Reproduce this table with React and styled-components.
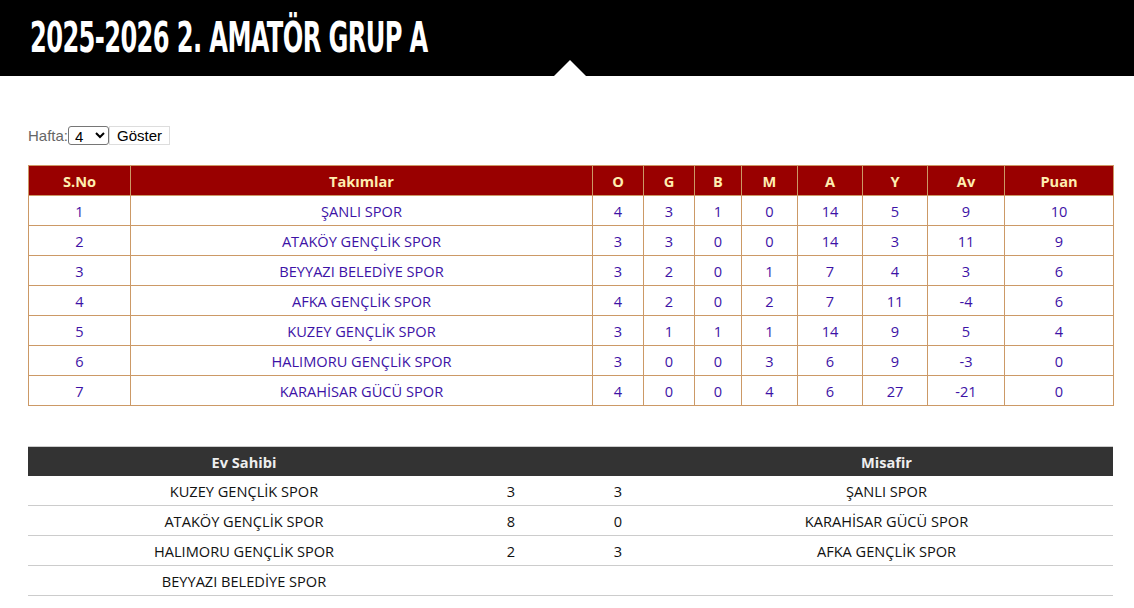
import React from 'react'
import styled, { createGlobalStyle } from 'styled-components'

const standings = [
  [1, 'ŞANLI SPOR', 4, 3, 1, 0, 14, 5, 9, 10],
  [2, 'ATAKÖY GENÇLİK SPOR', 3, 3, 0, 0, 14, 3, 11, 9],
  [3, 'BEYYAZI BELEDİYE SPOR', 3, 2, 0, 1, 7, 4, 3, 6],
  [4, 'AFKA GENÇLİK SPOR', 4, 2, 0, 2, 7, 11, -4, 6],
  [5, 'KUZEY GENÇLİK SPOR', 3, 1, 1, 1, 14, 9, 5, 4],
  [6, 'HALIMORU GENÇLİK SPOR', 3, 0, 0, 3, 6, 9, -3, 0],
  [7, 'KARAHİSAR GÜCÜ SPOR', 4, 0, 0, 4, 6, 27, -21, 0],
]

const fixtures = [
  ['KUZEY GENÇLİK SPOR', '3', '3', 'ŞANLI SPOR'],
  ['ATAKÖY GENÇLİK SPOR', '8', '0', 'KARAHİSAR GÜCÜ SPOR'],
  ['HALIMORU GENÇLİK SPOR', '2', '3', 'AFKA GENÇLİK SPOR'],
  ['BEYYAZI BELEDİYE SPOR', '', '', ''],
]

const cols = ['S.No', 'Takımlar', 'O', 'G', 'B', 'M', 'A', 'Y', 'Av', 'Puan']
const widths = [102, 462, 51, 51, 47, 56, 65, 65, 77, 109]

const App = () => {
  return (
    <>
      <Global />
      <Header>
        <Title>2025-2026 2. AMATÖR GRUP A</Title>
        <Notch />
      </Header>
      <Content>
        <Filter>
          <Label>Hafta:</Label>
          <Select defaultValue="4">
            {[1, 2, 3, 4, 5, 6, 7].map(n => (
              <option key={n} value={n}>{n}</option>
            ))}
          </Select>
          <ShowButton>Göster</ShowButton>
        </Filter>

        <Standings>
          <colgroup>
            {widths.map((w, i) => <col key={i} style={{ width: w }} />)}
          </colgroup>
          <thead>
            <tr>
              {cols.map(c => <Th key={c}>{c}</Th>)}
            </tr>
          </thead>
          <tbody>
            {standings.map(row => (
              <tr key={row[0]}>
                {row.map((v, i) => <Td key={i}>{v}</Td>)}
              </tr>
            ))}
          </tbody>
        </Standings>

        <Fixtures>
          <colgroup>
            <col style={{ width: 432 }} />
            <col style={{ width: 102 }} />
            <col style={{ width: 112 }} />
            <col />
          </colgroup>
          <thead>
            <tr>
              <FTh>Ev Sahibi</FTh>
              <FTh />
              <FTh />
              <FTh $shift>Misafir</FTh>
            </tr>
          </thead>
          <tbody>
            {fixtures.map((f, i) => (
              <tr key={i}>
                <FTd>{f[0]}</FTd>
                <FTd>{f[1]}</FTd>
                <FTd>{f[2]}</FTd>
                <FTd $shift>{f[3]}</FTd>
              </tr>
            ))}
          </tbody>
        </Fixtures>
      </Content>
    </>
  )
}

export default App

const Global = createGlobalStyle`
body {
  margin: 0;
  background: #fff;
  font-family: "Open Sans", "Liberation Sans", sans-serif;
}
`

const Header = styled.div`
position: relative;
height: 76px;
padding-left: 30px;
box-sizing: border-box;
background: #000;
overflow: hidden;
`

const Title = styled.h1`
margin: 0;
padding-top: 13px;
display: inline-block;
font-family: "DejaVu Sans Condensed", "Liberation Sans", sans-serif;
font-weight: bold;
font-size: 43px;
line-height: 48px;
color: #fff;
white-space: nowrap;
letter-spacing: -1px;
transform: scaleX(0.625);
transform-origin: left center;
`

const Notch = styled.div`
position: absolute;
left: 554px;
bottom: 0;
width: 0;
height: 0;
border-left: 16px solid transparent;
border-right: 16px solid transparent;
border-bottom: 16px solid #fff;
`

const Content = styled.div`
padding: 49px 21px 20px 28px;
`

const Filter = styled.div`
display: flex;
align-items: center;
height: 20px;
font-family: "Liberation Sans", Arial, sans-serif;
`

const Label = styled.span`
color: #666;
font-size: 15px;
`

const Select = styled.select`
font-family: "Liberation Sans", Arial, sans-serif;
font-size: 15px;
height: 19px;
width: 41px;
padding: 0 0 0 2px;
border: 1px solid #767676;
border-radius: 3px;
background: #fff;
color: #000;
`

const ShowButton = styled.button`
font-family: "Liberation Sans", Arial, sans-serif;
font-size: 15px;
height: 19px;
width: 61px;
padding: 0;
border: 1px solid #ddd;
background: #fff;
color: #000;
`

const Standings = styled.table`
margin-top: 20px;
width: 100%;
border-collapse: collapse;
table-layout: fixed;
font-size: 14.6px;
`

const Th = styled.th`
height: 28px;
padding: 1px 0 0;
background: #990000;
color: #ffeeb0;
font-weight: bold;
border: 1px solid #cc9966;
text-align: center;
`

const Td = styled.td`
height: 28px;
padding: 1px 0 0;
border: 1px solid #cc9966;
text-align: center;
color: #3d12a6;
`

const Fixtures = styled.table`
margin-top: 40px;
width: 100%;
border-collapse: collapse;
table-layout: fixed;
font-size: 14.6px;
`

const FTh = styled.th`
height: 28px;
padding: ${p => (p.$shift ? '1px 14px 0 0' : '1px 0 0')};
background: #333;
color: #eee;
font-weight: bold;
border-top: 1px solid #ccc;
text-align: center;
`

const FTd = styled.td`
height: 28px;
padding: ${p => (p.$shift ? '1px 14px 0 0' : '1px 0 0')};
color: #111;
border-bottom: 1px solid #ccc;
text-align: center;
`
